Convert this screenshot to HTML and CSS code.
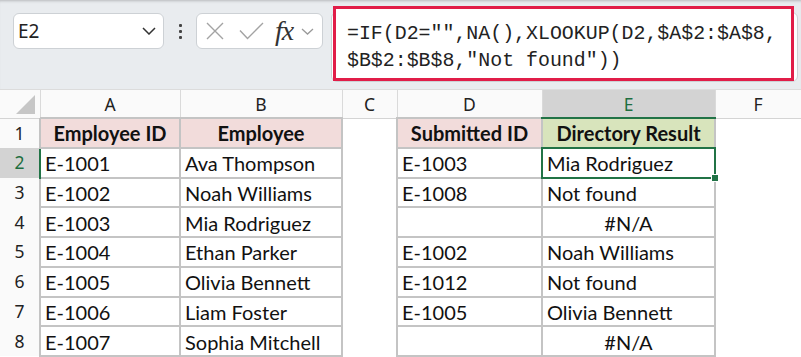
FILE: index.html
```html
<!DOCTYPE html>
<html lang="en">
<head>
    <meta charset="UTF-8">
    <title>Directory lookup</title>
    <link rel="stylesheet" href="styles.css">
</head>
<body>
    <div class="ribbon">
        <div class="name-box">
            <span>E2</span>
            <svg class="chev" width="14" height="8" viewBox="0 0 14 8"><polyline points="1,1 7,7 13,1" fill="none" stroke="#333" stroke-width="1.5"/></svg>
        </div>
        <div class="dots"><i></i><i></i><i></i></div>
        <div class="fx-box">
            <svg width="18" height="18" viewBox="0 0 18 18"><path d="M1 1 L17 17 M17 1 L1 17" stroke="#a3a3a3" stroke-width="1.4" fill="none"/></svg>
            <svg width="25" height="18" viewBox="0 0 25 18"><polyline points="1,8.5 8.5,16.5 24,1" stroke="#a3a3a3" stroke-width="1.4" fill="none"/></svg>
            <span class="fx">fx</span>
            <svg class="chev-sm" width="13" height="7" viewBox="0 0 13 7"><polyline points="1,1 6.5,6 12,1" fill="none" stroke="#9a9a9a" stroke-width="1.3"/></svg>
        </div>
        <div class="formula-bar">
            <!-- annotation box over the formula -->
            <div class="formula-mark">=IF(D2="",NA(),XLOOKUP(D2,$A$2:$A$8,<br>$B$2:$B$8,"Not found"))</div>
        </div>
    </div>

    <table class="sheet">
        <colgroup>
            <col class="c-rh"><col class="c-a"><col class="c-b"><col class="c-c"><col class="c-d"><col class="c-e"><col class="c-f">
        </colgroup>
        <thead>
            <tr class="col-heads">
                <th class="corner"><span class="tri"></span></th>
                <th>A</th><th>B</th><th>C</th><th>D</th><th class="active">E</th><th>F</th>
            </tr>
        </thead>
        <tbody>
            <tr>
                <th class="rh">1</th>
                <td class="b head pink">Employee ID</td>
                <td class="b head pink">Employee</td>
                <td></td>
                <td class="b head pink">Submitted ID</td>
                <td class="b head green">Directory Result</td>
                <td></td>
            </tr>
            <tr>
                <th class="rh active">2</th>
                <td class="b">E-1001</td><td class="b">Ava Thompson</td><td></td>
                <td class="b">E-1003</td><td class="b selected">Mia Rodriguez</td><td></td>
            </tr>
            <tr>
                <th class="rh">3</th>
                <td class="b">E-1002</td><td class="b">Noah Williams</td><td></td>
                <td class="b">E-1008</td><td class="b">Not found</td><td></td>
            </tr>
            <tr>
                <th class="rh">4</th>
                <td class="b">E-1003</td><td class="b">Mia Rodriguez</td><td></td>
                <td class="b"></td><td class="b center">#N/A</td><td></td>
            </tr>
            <tr>
                <th class="rh">5</th>
                <td class="b">E-1004</td><td class="b">Ethan Parker</td><td></td>
                <td class="b">E-1002</td><td class="b">Noah Williams</td><td></td>
            </tr>
            <tr>
                <th class="rh">6</th>
                <td class="b">E-1005</td><td class="b">Olivia Bennett</td><td></td>
                <td class="b">E-1012</td><td class="b">Not found</td><td></td>
            </tr>
            <tr>
                <th class="rh">7</th>
                <td class="b">E-1006</td><td class="b">Liam Foster</td><td></td>
                <td class="b">E-1005</td><td class="b">Olivia Bennett</td><td></td>
            </tr>
            <tr>
                <th class="rh">8</th>
                <td class="b">E-1007</td><td class="b">Sophia Mitchell</td><td></td>
                <td class="b"></td><td class="b center">#N/A</td><td></td>
            </tr>
        </tbody>
    </table>
</body>
</html>
```

FILE: styles.css
```css
body {
    margin: 0;
    width: 801px;
    height: 357px;
    overflow: hidden;
    background: #fff;
    font-family: 'Lato', 'Noto Sans', sans-serif;
}

/* Barra de fórmulas */
.ribbon {
    height: 90px;
    box-sizing: border-box;
    background: #e9ecef;
    display: flex;
    align-items: flex-start;
    padding: 13px 0 0 13px;
    box-shadow: inset 0 3px 3px -2px rgba(0, 0, 0, 0.22);
    border-bottom: 1px solid #dcdcdc;
}
.name-box {
    width: 151px;
    height: 36px;
    box-sizing: border-box;
    background: #fff;
    border: 1px solid #cdd1d5;
    border-radius: 6px;
    display: flex;
    align-items: center;
    justify-content: space-between;
    padding: 0 7px 0 4px;
    font-family: 'Noto Sans', sans-serif;
    font-size: 19px;
    color: #222;
}
.dots {
    width: 3px;
    margin: 11px 0 0 15px;
    display: flex;
    flex-direction: column;
    gap: 3px;
}
.dots i {
    width: 3px;
    height: 3px;
    background: #444;
    border-radius: 1px;
}
.fx-box {
    width: 127px;
    height: 36px;
    box-sizing: border-box;
    margin-left: 14px;
    background: #fff;
    border: 1px solid #cdd1d5;
    border-radius: 6px;
    display: flex;
    align-items: center;
    padding-left: 9px;
}
.fx-box svg:nth-child(2) {
    margin-left: 15px;
}
.fx {
    font-family: 'Liberation Serif', serif;
    font-style: italic;
    font-size: 28px;
    color: #333;
    margin-left: 11px;
    letter-spacing: -1px;
    line-height: 1;
}
.chev-sm {
    margin-left: 8px;
}
.formula-bar {
    position: relative;
    width: 467px;
    height: 70px;
    box-sizing: border-box;
    margin-left: 8px;
    margin-top: -1px;
    background: #fff;
    border: 1px solid #cdd1d5;
    border-radius: 6px;
}
.formula-mark {
    position: absolute;
    left: 1px;
    top: -7px;
    width: 461px;
    height: 75px;
    box-sizing: border-box;
    border: 3px solid #e11d48;
    background: #fff;
    padding: 12px 0 0 11px;
    font-family: 'Liberation Mono', monospace;
    font-size: 19.9px;
    line-height: 26.5px;
    color: #222;
    white-space: nowrap;
}

/* Hoja */
.sheet {
    table-layout: fixed;
    border-collapse: collapse;
    width: 801px;
}
.c-rh { width: 40px; }
.c-a { width: 140px; }
.c-b { width: 162px; }
.c-c { width: 55px; }
.c-d { width: 145px; }
.c-e { width: 173px; }
.c-f { width: 86px; }

.col-heads th {
    height: 27px;
    padding: 0;
    background: #fafafa;
    border-right: 1px solid #dadada;
    border-bottom: 1px solid #d4d4d4;
    font-family: 'Noto Sans', sans-serif;
    font-weight: normal;
    font-size: 17.5px;
    color: #222;
}
.col-heads th.active {
    background: #d3d3d3;
    color: #1e6e40;
    border-bottom: 2px solid #217346;
}
.corner {
    position: relative;
}
.tri {
    position: absolute;
    right: 5px;
    bottom: 4px;
    width: 0;
    height: 0;
    border-left: 19px solid transparent;
    border-bottom: 19px solid #c6c6c6;
}

tbody tr {
    height: 29.75px;
}
.rh {
    padding: 0 0 1px;
    background: #fafafa;
    border-right: 1px solid #d4d4d4;
    font-family: 'Noto Sans', sans-serif;
    font-weight: normal;
    font-size: 17.5px;
    color: #222;
}
.rh.active {
    background: #d3d3d3;
    color: #1e6e40;
    border-right: 2px solid #217346;
}

td {
    padding: 1px 4px 0;
    font-size: 20px;
    line-height: 26px;
    color: #111;
    white-space: nowrap;
    overflow: hidden;
}
td.b {
    border: 2px solid #c4c4c4;
}
td.head {
    font-weight: bold;
    text-align: center;
}
td.pink {
    background: #f2dcdb;
}
td.green {
    background: #d8e4bc;
}
td.center {
    text-align: center;
}
td.selected {
    position: relative;
    overflow: visible;
}
td.selected::after {
    content: "";
    position: absolute;
    left: -2px;
    top: -2px;
    right: -2px;
    bottom: -2px;
    border: 2px solid #217346;
}
td.selected::before {
    content: "";
    position: absolute;
    right: -5px;
    bottom: -5px;
    width: 6px;
    height: 6px;
    background: #217346;
    border: 1px solid #fff;
    z-index: 1;
}
```
